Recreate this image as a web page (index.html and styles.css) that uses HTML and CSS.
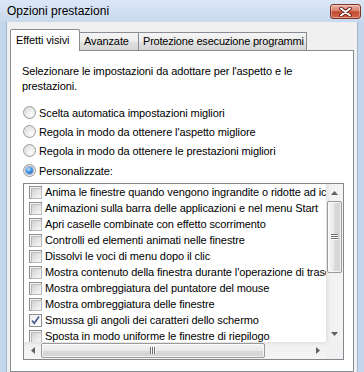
FILE: index.html
```html
<!DOCTYPE html>
<html lang="it">
<head>
  <meta charset="UTF-8" />
  <meta name="viewport" content="width=device-width, initial-scale=1.0" />
  <title>Opzioni prestazioni</title>
  <link rel="stylesheet" href="styles.css">
</head>
<body>
  <div class="window">
    <div class="titlebar">
      <span class="title">Opzioni prestazioni</span>
      <button class="close" aria-label="Chiudi">
        <svg width="13" height="10" viewBox="0 0 13 10">
          <path d="M2 1.5 L11 8.5 M11 1.5 L2 8.5" stroke="#5e1a10" stroke-width="3.6" stroke-linecap="round" fill="none"/>
          <path d="M2 1.5 L11 8.5 M11 1.5 L2 8.5" stroke="#fff" stroke-width="2" stroke-linecap="round" fill="none"/>
        </svg>
      </button>
    </div>

    <div class="client">
      <div class="tabs">
        <div class="tab active">Effetti visivi</div>
        <div class="tab tab-adv">Avanzate</div>
        <div class="tab tab-dep">Protezione esecuzione programmi</div>
      </div>

      <div class="panel">
        <p class="intro">Selezionare le impostazioni da adottare per l'aspetto e le<br>prestazioni.</p>

        <div class="options">
          <label class="option"><span class="radio"></span>Scelta automatica impostazioni migliori</label>
          <label class="option"><span class="radio"></span>Regola in modo da ottenere l'aspetto migliore</label>
          <label class="option"><span class="radio"></span>Regola in modo da ottenere le prestazioni migliori</label>
          <label class="option custom"><span class="radio checked"></span>Personalizzate:</label>
        </div>

        <div class="listbox">
          <div class="items">
            <div class="item"><span class="check"></span>Anima le finestre quando vengono ingrandite o ridotte ad icona</div>
            <div class="item"><span class="check"></span>Animazioni sulla barra delle applicazioni e nel menu Start</div>
            <div class="item"><span class="check"></span>Apri caselle combinate con effetto scorrimento</div>
            <div class="item"><span class="check"></span>Controlli ed elementi animati nelle finestre</div>
            <div class="item"><span class="check"></span>Dissolvi le voci di menu dopo il clic</div>
            <div class="item"><span class="check"></span>Mostra contenuto della finestra durante l'operazione di trascinamento</div>
            <div class="item"><span class="check"></span>Mostra ombreggiatura del puntatore del mouse</div>
            <div class="item"><span class="check"></span>Mostra ombreggiatura delle finestre</div>
            <div class="item"><span class="check checked">
              <svg width="11" height="11" viewBox="0 0 11 11"><path d="M2 5.5 L4.3 8.3 L9 1.5" stroke="#4b5f93" stroke-width="1.7" fill="none"/></svg>
            </span>Smussa gli angoli dei caratteri dello schermo</div>
            <div class="item"><span class="check"></span>Sposta in modo uniforme le finestre di riepilogo</div>
            <div class="item"><span class="check"></span>Usa stili di visualizzazione per finestre e pulsanti</div>
          </div>

          <div class="vscroll">
            <div class="sb-btn">
              <svg width="7" height="4" viewBox="0 0 7 4"><path d="M0 4 L3.5 0 L7 4 Z" fill="#606060"/></svg>
            </div>
            <div class="vthumb"><span class="vgrip"></span></div>
            <div class="track"></div>
            <div class="sb-btn">
              <svg width="7" height="4" viewBox="0 0 7 4"><path d="M0 0 L3.5 4 L7 0 Z" fill="#606060"/></svg>
            </div>
          </div>

          <div class="hscroll">
            <div class="sb-btn">
              <svg width="4" height="7" viewBox="0 0 4 7"><path d="M4 0 L0 3.5 L4 7 Z" fill="#606060"/></svg>
            </div>
            <div class="hthumb"><span class="hgrip"></span></div>
            <div class="track"></div>
            <div class="sb-btn">
              <svg width="4" height="7" viewBox="0 0 4 7"><path d="M0 0 L4 3.5 L0 7 Z" fill="#606060"/></svg>
            </div>
          </div>

          <div class="corner"></div>
        </div>
      </div>
    </div>
  </div>
</body>
</html>
```

FILE: styles.css
```css
/* Base */
* {
  box-sizing: border-box;
  margin: 0;
  padding: 0;
}
html, body {
  width: 364px;
  height: 372px;
  overflow: hidden;
}
body {
  font-family: "Liberation Sans", Arial, sans-serif;
  font-size: 11px;
  letter-spacing: -0.1px;
  color: #000;
  background: #c4d6ec;
}

/* Window frame */
.window {
  display: flex;
  flex-direction: column;
  height: 372px;
  background: #c4d6ec;
}
.titlebar {
  flex: none;
  height: 22px;
  display: flex;
  align-items: flex-start;
  justify-content: space-between;
  background: linear-gradient(#dce7f5, #c8d9ee);
}
.title {
  font-size: 12px;
  line-height: 22px;
  letter-spacing: 0;
  padding-left: 7px;
}
.close {
  width: 31px;
  height: 15px;
  margin: 4px 3px 0 0;
  border: 1px solid #7d3326;
  border-radius: 3px;
  display: flex;
  align-items: center;
  justify-content: center;
  background: linear-gradient(#eab1a3, #d8806b 45%, #c24a30 52%, #d2674d);
  box-shadow: inset 0 0 0 1px rgba(255,255,255,0.35);
}

.client {
  flex: 1;
  display: flex;
  flex-direction: column;
  margin: 0 6px;
  padding: 7px 3px 0;
  background: #f0f0f0;
  border-left: 1px solid #a3b6cf;
  border-right: 1px solid #a3b6cf;
}

/* Tabs */
.tabs {
  position: relative;
  z-index: 1;
  flex: none;
  height: 21px;
  display: flex;
  align-items: flex-end;
}
.tab {
  height: 18px;
  line-height: 17px;
  padding-left: 4px;
  white-space: nowrap;
  overflow: hidden;
  border: 1px solid #898c95;
  border-bottom: 0;
  margin-left: -1px;
  background: linear-gradient(#f4f4f4, #ececec 50%, #e0e0e0 50%, #d6d6d6);
}
.tab.active {
  width: 70px;
  height: 22px;
  margin: 0 0 -1px 0;
  padding: 2px 0 0 5px;
  background: #fff;
  border-radius: 2px 2px 0 0;
}
.tab-adv {
  width: 60px;
}
.tab-dep {
  width: 169px;
  letter-spacing: -0.2px;
}

/* Panel */
.panel {
  flex: 1;
  background: #fff;
  border: 1px solid #898c95;
  padding: 13px 8px 0 11px;
}
.intro {
  line-height: 15px;
}
.options {
  margin: 9px 0 0 1px;
}
.option {
  display: flex;
  align-items: center;
  height: 19px;
}
.option.custom {
  margin-top: 1px;
}
.radio {
  flex: none;
  width: 13px;
  height: 13px;
  margin-right: 3px;
  border-radius: 50%;
  border: 1px solid #9a9c9e;
  background: radial-gradient(circle at 62% 68%, #ffffff 0, #eeeeee 35%, #d6d7d9 100%);
  display: flex;
  align-items: center;
  justify-content: center;
}
.radio.checked::after {
  content: "";
  width: 7px;
  height: 7px;
  border-radius: 50%;
  background: radial-gradient(circle at 38% 32%, #c6e6ff 0, #4a9be8 40%, #1a5aa8 100%);
  box-shadow: 0 0 0 1px rgba(20,70,140,0.35);
}

/* List with checkboxes */
.listbox {
  margin: 3px 0 0 1px;
  width: 321px;
  height: 177px;
  border: 1px solid #828790;
  display: grid;
  grid-template-columns: 302px 17px;
  grid-template-rows: 158px 17px;
}
.items {
  overflow: hidden;
}
.item {
  display: flex;
  align-items: center;
  height: 16px;
  padding-left: 5px;
  white-space: nowrap;
}
.check {
  flex: none;
  width: 13px;
  height: 13px;
  margin-right: 3px;
  padding: 1px;
  border: 1px solid #8f8f8f;
  background: #f6f6f6;
}
.check::before {
  content: "";
  display: block;
  width: 9px;
  height: 9px;
  border: 1px solid #b9b9b9;
  background: linear-gradient(135deg, #d2d2d2, #f8f8f8);
}
.check.checked {
  padding: 0;
  background: linear-gradient(135deg, #eeeeee, #ffffff);
}
.check.checked::before {
  display: none;
}
.check svg {
  display: block;
}

/* Scrollbars */
.vscroll {
  display: flex;
  flex-direction: column;
  background: linear-gradient(to right, #e3e3e3, #f1f1f1 25%, #f4f4f4);
}
.hscroll {
  display: flex;
  background: linear-gradient(#e3e3e3, #f1f1f1 25%, #f4f4f4);
}
.sb-btn {
  flex: none;
  width: 17px;
  height: 17px;
  display: flex;
  align-items: center;
  justify-content: center;
}
.track {
  flex: 1;
}
.vthumb {
  flex: none;
  height: 72px;
  margin: 0 1px;
  border: 1px solid #9a9a9a;
  border-radius: 2px;
  background: linear-gradient(to right, #f4f4f4, #e9e9e9 50%, #dadada 50%, #d2d2d2);
  box-shadow: inset 0 0 0 1px rgba(255,255,255,0.7);
  display: flex;
  align-items: center;
  justify-content: center;
}
.hthumb {
  flex: none;
  width: 224px;
  margin: 1px 0;
  border: 1px solid #9a9a9a;
  border-radius: 2px;
  background: linear-gradient(#f4f4f4, #e9e9e9 50%, #dadada 50%, #d2d2d2);
  box-shadow: inset 0 0 0 1px rgba(255,255,255,0.7);
  display: flex;
  align-items: center;
  justify-content: center;
}
.vgrip {
  width: 7px;
  height: 6px;
  background: repeating-linear-gradient(#6f6f6f 0 1px, #fafafa 1px 2px);
}
.hgrip {
  width: 6px;
  height: 7px;
  background: repeating-linear-gradient(to right, #6f6f6f 0 1px, #fafafa 1px 2px);
}
.corner {
  background: #f0f0f0;
}
```
